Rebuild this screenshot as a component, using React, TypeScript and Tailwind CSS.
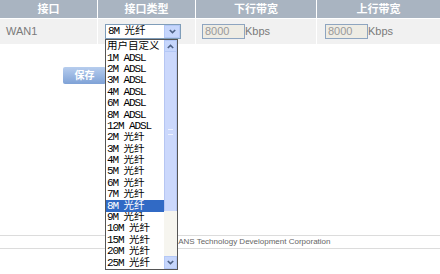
import React from 'react'

const options = [
  '用户自定义',
  '1M ADSL',
  '2M ADSL',
  '3M ADSL',
  '4M ADSL',
  '6M ADSL',
  '8M ADSL',
  '12M ADSL',
  '2M 光纤',
  '3M 光纤',
  '4M 光纤',
  '5M 光纤',
  '6M 光纤',
  '7M 光纤',
  '8M 光纤',
  '9M 光纤',
  '10M 光纤',
  '15M 光纤',
  '20M 光纤',
  '25M 光纤',
]

const listFont = {
  fontFamily: "'Liberation Mono', 'Noto Sans CJK SC', monospace",
}

// 半角部分收紧，汉字保持正常宽度
const Label = ({ text }: { text: string }) => {
  const parts = text.split(/([\u4e00-\u9fa5]+)/).filter(Boolean)
  return (
    <span className="whitespace-pre">
      {parts.map((p, i) =>
        /[\u4e00-\u9fa5]/.test(p) ? (
          <span key={i} className="text-[10.5px]">{p}</span>
        ) : (
          <span key={i} className="tracking-[-1.1px]">{p}</span>
        )
      )}
    </span>
  )
}

const Chevron = ({ up = false }: { up?: boolean }) => (
  <svg width="7" height="5" viewBox="0 0 7 5" className={up ? 'rotate-180' : ''}>
    <path d="M0.8 1 L3.5 3.6 L6.2 1" fill="none" stroke="#4d6185" strokeWidth="1.6" />
  </svg>
)

const Dropdown = () => (
  <div className="absolute left-0 top-[15px] w-[73px] h-[231px] bg-white border border-[#555] flex z-10">
    <div className="flex-1 flex flex-col pt-px overflow-hidden" style={listFont}>
      {options.map((o, i) => (
        <div
          key={o}
          className={`h-[11.4px] flex items-center leading-none text-[11px] pl-px whitespace-nowrap overflow-hidden ${
            i === 14 ? 'bg-[#316ac5] text-white' : 'text-black'
          }`}
        >
          <Label text={o} />
        </div>
      ))}
    </div>
    <div className="w-[13px] flex flex-col">
      <div className="h-[12px] bg-[#c6d6fc] border border-[#b4c8f6] flex items-center justify-center">
        <Chevron up />
      </div>
      <div className="h-[159px] bg-[#cbd8fc] border-x border-[#b6c6f2] flex items-center justify-center">
        <div className="w-[5px] h-[6px] border-y border-[#eef2ff]" />
      </div>
      <div className="flex-1 bg-[#f6f5ef]" />
      <div className="h-[13px] bg-[#c6d6fc] border border-[#b4c8f6] flex items-center justify-center">
        <Chevron />
      </div>
    </div>
  </div>
)

const BwInput = () => (
  <div className="flex items-center">
    <div className="w-[43px] h-[15px] border border-[#8ea5c0] bg-[#eeece4] text-[11px] leading-[13px] pl-[2px] text-[#9a9a9a]">
      8000
    </div>
    <span className="text-[11px] text-[#7a7a7a]">Kbps</span>
  </div>
)

export default function App() {
  return (
    <div
      className="w-[440px] h-[274px] bg-white relative overflow-hidden"
      style={{ fontFamily: "'Liberation Sans', 'Noto Sans CJK SC', sans-serif" }}
    >
      {/* 表头 */}
      <div className="flex h-[19px] text-white font-bold text-[11px] border-b border-white">
        <div className="w-[97px] bg-[#a9b4c1] flex items-center justify-center">接口</div>
        <div className="w-[98px] bg-[#a9b4c1] border-l border-white flex items-center justify-center">
          接口类型
        </div>
        <div className="w-[121px] bg-[#a9b4c1] border-l border-white flex items-center justify-center">
          下行带宽
        </div>
        <div className="flex-1 bg-[#a9b4c1] border-l border-white flex items-center justify-center">
          上行带宽
        </div>
      </div>

      {/* 数据行 */}
      <div className="flex h-[25px] bg-[#f1f1f1] text-[11px]">
        <div className="w-[97px] flex items-center pl-[6px] text-[#7a7a7a]">WAN1</div>
        <div className="w-[98px] border-l border-white flex items-center pl-[7px]">
          <div className="relative">
            <div className="w-[76px] h-[15px] bg-white border border-[#7f9db9] flex items-center">
              <span className="flex-1 pl-[2px] text-[11px] leading-none" style={listFont}>
                <Label text="8M 光纤" />
              </span>
              <div className="w-[16px] h-[13px] bg-[#c6d6fc] border border-[#b4c8f6] flex items-center justify-center">
                <Chevron />
              </div>
            </div>
            <Dropdown />
          </div>
        </div>
        <div className="w-[121px] border-l border-white flex items-center pl-[6px]">
          <BwInput />
        </div>
        <div className="flex-1 border-l border-white flex items-center pl-[8px]">
          <BwInput />
        </div>
      </div>

      {/* 保存 */}
      <div className="pt-[23px] pl-[63px]">
        <button
          type="button"
          className="block w-[43px] h-[17px] bg-gradient-to-b from-[#b7cdee] to-[#7fa2d6] text-white font-bold text-[10px] leading-[17px] rounded-[2px]"
        >
          保存
        </button>
      </div>

      {/* 页脚 */}
      <div className="mt-[151px] h-[14px] border-y border-[#dcdcdc] flex items-center justify-center text-[8px] text-[#666]">
        <span className="pl-[58px]">TRANS Technology Development Corporation</span>
      </div>
    </div>
  )
}
